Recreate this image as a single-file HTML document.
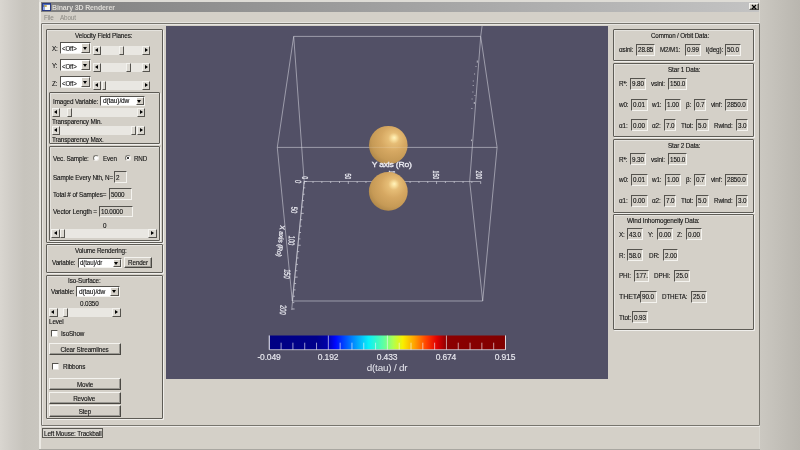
<!DOCTYPE html>
<html><head><meta charset="utf-8"><title>Binary 3D Renderer</title>
<style>
html,body{margin:0;padding:0;width:800px;height:450px;overflow:hidden;background:#cbc9c3;}
body{position:relative;font-family:"Liberation Sans",sans-serif;color:#000;-webkit-text-stroke-width:0.12px;letter-spacing:-0.15px;}
div,i,b,span{box-sizing:border-box;}
#root{position:absolute;left:0;top:0;width:800px;height:450px;overflow:hidden;will-change:transform;}
#root div{position:absolute;}
.t{white-space:nowrap;color:#111;transform-origin:0 50%;}
.ns{-webkit-text-stroke-width:0;}
.fr{border:1px solid #5e5c56;border-radius:1px;box-shadow:inset 1px 1px 0 rgba(255,255,255,.4),1px 1px 0 rgba(255,255,255,.65);}
.in{border:1px solid #55534e;border-right-color:#f4f3ef;border-bottom-color:#f4f3ef;background:#d4d0c8;white-space:nowrap;overflow:hidden;}
.in span{position:absolute;left:1px;top:0;color:#111;transform-origin:0 50%;}
.in.wh{background:#fff;}
.in.wh span{left:1.8px;}
.cb{position:absolute;right:0;top:0;bottom:0;background:#d4d0c8;border:1px solid #fff;border-right-color:#55534e;border-bottom-color:#55534e;}
.ad{position:absolute;left:50%;top:50%;margin:-1px 0 0 -2.5px;width:0;height:0;border-left:2.5px solid transparent;border-right:2.5px solid transparent;border-top:3px solid #000;}
.al{position:absolute;left:50%;top:50%;margin:-2.5px 0 0 -2px;width:0;height:0;border-top:2.5px solid transparent;border-bottom:2.5px solid transparent;border-right:3px solid #000;}
.ar{position:absolute;left:50%;top:50%;margin:-2.5px 0 0 -1px;width:0;height:0;border-top:2.5px solid transparent;border-bottom:2.5px solid transparent;border-left:3px solid #000;}
.sc{background:#e9e7e2;}
.sb{position:absolute;top:0;bottom:0;background:#dbd8d1;border:1px solid #f4f3ef;border-right-color:#55534e;border-bottom-color:#55534e;}
.btn{background:#d4d0c8;border:1px solid #f4f3ef;border-right-color:#4a4843;border-bottom-color:#4a4843;text-align:center;white-space:nowrap;color:#111;box-shadow:inset -1px -1px 0 #9a9892;}
.ck{background:#fff;border:1px solid #55534e;border-right-color:#e8e6e0;border-bottom-color:#e8e6e0;}
.rd{background:#fff;border:1px solid #77756f;border-right-color:#eeece8;border-bottom-color:#eeece8;border-radius:50%;}
.rd b{position:absolute;left:1.2px;top:1.2px;width:2px;height:2px;background:#000;border-radius:50%;}
</style></head><body><div id="root">

<div class="" style="left:0px;top:0px;width:40px;height:450px;background:linear-gradient(90deg,#d9d6d0 0%,#cfccc6 30%,#c7c4bd 60%,#c9c6bf 100%)"></div>
<div class="" style="left:760px;top:0px;width:40px;height:450px;z-index:5;background:linear-gradient(90deg,#cbc8c1 0%,#c2bfb8 50%,#b9b6af 100%)"></div>
<div class="" style="left:38.6px;top:0px;width:721.4px;height:450px;background:#d4d0c8;border-left:2px solid #ebe9e3;border-right:1px solid #d9d7d0;"></div>
<div class="" style="left:39px;top:0px;width:721px;height:2px;background:#dedcd6"></div>
<div class="" style="left:39px;top:449px;width:721px;height:1px;background:#a9a7a1"></div>
<div class="" style="left:41px;top:2px;width:718px;height:9.7px;background:linear-gradient(90deg,#808080 0%,#c3c3c3 100%)"></div>
<div class="" style="left:42px;top:3px;width:9px;height:8px;background:#5070c0;border:1px solid #2a3a80;"><div style="left:2px;top:0.5px;width:4.5px;height:5.5px;background:#f8f8f4;"></div><div style="left:1.2px;top:0.8px;width:2.6px;height:2.6px;background:#c8b060;border-radius:50%"></div><div style="left:0;top:3px;width:2px;height:3px;background:#90a8e0"></div></div>
<div class="t ns" style="left:52.2px;top:2.54px;font-size:7.6px;line-height:9.12px;transform:scaleX(0.920);color:#dddbd6;font-weight:bold;">Binary 3D Renderer</div>
<div class="btn" style="left:749px;top:3px;width:10px;height:7.4px;"><svg width="8" height="6" viewBox="0 0 8 6" style="position:absolute;left:0;top:-0.3px"><path d="M2 1 L6 5 M6 1 L2 5" stroke="#000" stroke-width="1.15" fill="none"/></svg></div>
<div class="t ns" style="left:44px;top:14.3px;font-size:7px;line-height:8.4px;transform:scaleX(0.914);color:#8b8983;">File</div>
<div class="t ns" style="left:60px;top:14.3px;font-size:7px;line-height:8.4px;transform:scaleX(0.902);color:#8b8983;">About</div>
<div class="fr" style="left:41px;top:23px;width:718.5px;height:402.5px;border-color:#77756e;box-shadow:inset 1px 1px 0 rgba(255,255,255,.45),1px 1px 0 rgba(255,255,255,.6),0 -1px 0 rgba(255,255,255,.4);"></div>
<div class="fr" style="left:46px;top:29px;width:116.5px;height:214px;"></div>
<div class="t" style="left:75.35px;top:31.8px;font-size:7px;line-height:8.4px;transform:scaleX(0.906);">Velocity Field Planes:</div>
<div class="t" style="left:51.5px;top:44.5px;font-size:7px;line-height:8.4px;transform:scaleX(0.906);">X:</div>
<div class="in wh" style="left:59.5px;top:42px;width:31.4px;height:12px;"><span style="top:1.2px;font-size:7px;line-height:9.7px;transform:scaleX(0.878)">&lt;Off&gt;</span><i class="cb" style="width:8.6px"><b class="ad"></b></i></div>
<div class="sc" style="left:92.8px;top:45.6px;width:57.5px;height:9px;"><i class="sb" style="left:0;width:8.5px"><b class="al"></b></i><i class="sb" style="right:0;width:8.5px"><b class="ar"></b></i><i class="sb" style="left:26.2px;width:5px"></i></div>
<div class="t" style="left:51.5px;top:62.2px;font-size:7px;line-height:8.4px;transform:scaleX(0.909);">Y:</div>
<div class="in wh" style="left:59.5px;top:58.8px;width:31.4px;height:12px;"><span style="top:2.1px;font-size:7px;line-height:9.7px;transform:scaleX(0.878)">&lt;Off&gt;</span><i class="cb" style="width:8.6px"><b class="ad"></b></i></div>
<div class="sc" style="left:92.8px;top:63.3px;width:57.5px;height:9px;"><i class="sb" style="left:0;width:8.5px"><b class="al"></b></i><i class="sb" style="right:0;width:8.5px"><b class="ar"></b></i><i class="sb" style="left:33.2px;width:5px"></i></div>
<div class="t" style="left:51.5px;top:79.8px;font-size:7px;line-height:8.4px;transform:scaleX(0.909);">Z:</div>
<div class="in wh" style="left:59.5px;top:76.3px;width:31.4px;height:12px;"><span style="top:2.2px;font-size:7px;line-height:9.7px;transform:scaleX(0.878)">&lt;Off&gt;</span><i class="cb" style="width:8.6px"><b class="ad"></b></i></div>
<div class="sc" style="left:92.8px;top:80.9px;width:57.5px;height:9px;"><i class="sb" style="left:0;width:8.5px"><b class="al"></b></i><i class="sb" style="right:0;width:8.5px"><b class="ar"></b></i><i class="sb" style="left:9.2px;width:4px"></i></div>
<div class="fr" style="left:49px;top:92.3px;width:110.5px;height:52px;"></div>
<div class="t" style="left:53px;top:97.5px;font-size:7px;line-height:8.4px;transform:scaleX(0.907);">Imaged Variable:</div>
<div class="in wh" style="left:100px;top:95.5px;width:45.2px;height:10.7px;"><span style="top:0.9px;font-size:7px;line-height:8.4px;transform:scaleX(0.942)">d(tau)/dw</span><i class="cb" style="width:8.6px"><b class="ad"></b></i></div>
<div class="sc" style="left:51.5px;top:107.5px;width:93.5px;height:9.3px;"><i class="sb" style="left:0;width:8.5px"><b class="al"></b></i><i class="sb" style="right:0;width:8.5px"><b class="ar"></b></i><i class="sb" style="left:15.3px;width:5px"></i></div>
<div class="t" style="left:52px;top:117.8px;font-size:7px;line-height:8.4px;transform:scaleX(0.905);">Transparency Min.</div>
<div class="sc" style="left:51.5px;top:126px;width:93.5px;height:9.2px;"><i class="sb" style="left:0;width:8.5px"><b class="al"></b></i><i class="sb" style="right:0;width:8.5px"><b class="ar"></b></i><i class="sb" style="left:79.7px;width:5px"></i></div>
<div class="t" style="left:52px;top:135.8px;font-size:7px;line-height:8.4px;transform:scaleX(0.904);">Transparency Max.</div>
<div class="fr" style="left:49px;top:146px;width:110.5px;height:94.7px;"></div>
<div class="t" style="left:52.5px;top:154.5px;font-size:7px;line-height:8.4px;transform:scaleX(0.904);">Vec. Sample:</div>
<div class="rd" style="left:92.5px;top:154.8px;width:6.4px;height:6.4px;"></div>
<div class="t" style="left:102.5px;top:154.5px;font-size:7px;line-height:8.4px;transform:scaleX(0.899);">Even</div>
<div class="rd" style="left:124.5px;top:154.8px;width:6.4px;height:6.4px;"><b></b></div>
<div class="t" style="left:134px;top:154.5px;font-size:7px;line-height:8.4px;transform:scaleX(0.891);">RND</div>
<div class="t" style="left:53px;top:173.5px;font-size:7px;line-height:8.4px;transform:scaleX(0.904);">Sample Every Nth, N=</div>
<div class="in" style="left:114px;top:171.2px;width:12.5px;height:11.5px;"><span style="top:1.6px;font-size:7px;line-height:8.4px;transform:scaleX(0.900)">2</span></div>
<div class="t" style="left:53px;top:190.7px;font-size:7px;line-height:8.4px;transform:scaleX(0.907);">Total # of Samples=</div>
<div class="in" style="left:109px;top:188.4px;width:23px;height:11.6px;"><span style="top:1.3px;font-size:7px;line-height:8.4px;transform:scaleX(0.900)">5000</span></div>
<div class="t" style="left:53px;top:207.8px;font-size:7px;line-height:8.4px;transform:scaleX(0.937);">Vector Length =</div>
<div class="in" style="left:99.3px;top:205.6px;width:33.4px;height:11.8px;"><span style="top:1.2px;font-size:7px;line-height:8.4px;transform:scaleX(0.902)">10.0000</span></div>
<div class="t" style="left:102.62px;top:221.5px;font-size:7px;line-height:8.4px;transform:scaleX(0.900);">0</div>
<div class="sc" style="left:51.4px;top:229px;width:105.3px;height:9px;"><i class="sb" style="left:0;width:8.5px"><b class="al"></b></i><i class="sb" style="right:0;width:8.5px"><b class="ar"></b></i><i class="sb" style="left:8.6px;width:4.7px"></i></div>
<div class="fr" style="left:46px;top:244.3px;width:116.5px;height:29px;"></div>
<div class="t" style="left:75.25px;top:247px;font-size:7px;line-height:8.4px;transform:scaleX(0.904);">Volume Rendering:</div>
<div class="t" style="left:52px;top:259.2px;font-size:7px;line-height:8.4px;transform:scaleX(0.910);">Variable:</div>
<div class="in wh" style="left:77.5px;top:257.5px;width:44.7px;height:10.9px;"><span style="top:0.9px;font-size:7px;line-height:8.6px;transform:scaleX(0.884)">d(tau)/dr</span><i class="cb" style="width:8.6px"><b class="ad"></b></i></div>
<div class="btn" style="left:124px;top:257.3px;width:28px;height:11px;font-size:7px;line-height:10.6px"><span style="display:inline-block;transform:scaleX(0.900)">Render</span></div>
<div class="fr" style="left:46px;top:274.5px;width:116.5px;height:144.3px;"></div>
<div class="t" style="left:68.18px;top:277.2px;font-size:7px;line-height:8.4px;transform:scaleX(0.908);">Iso-Surface:</div>
<div class="t" style="left:50.5px;top:287.7px;font-size:7px;line-height:8.4px;transform:scaleX(0.910);">Variable:</div>
<div class="in wh" style="left:76px;top:285.6px;width:43.9px;height:11.1px;"><span style="top:1.5px;font-size:7px;line-height:8.8px;transform:scaleX(0.942)">d(tau)/dw</span><i class="cb" style="width:8.6px"><b class="ad"></b></i></div>
<div class="t" style="left:79.74px;top:299.5px;font-size:7px;line-height:8.4px;transform:scaleX(0.903);">0.0350</div>
<div class="sc" style="left:49px;top:308px;width:71.7px;height:8.7px;"><i class="sb" style="left:0;width:8.5px"><b class="al"></b></i><i class="sb" style="right:0;width:8.5px"><b class="ar"></b></i><i class="sb" style="left:14px;width:5px"></i></div>
<div class="t" style="left:49px;top:317.8px;font-size:7px;line-height:8.4px;transform:scaleX(0.906);">Level</div>
<div class="ck" style="left:50.5px;top:329.8px;width:7px;height:7px;"></div>
<div class="t" style="left:61px;top:329.8px;font-size:7px;line-height:8.4px;transform:scaleX(0.900);">IsoShow</div>
<div class="btn" style="left:48.5px;top:343px;width:72.2px;height:12.3px;font-size:7px;line-height:11.9px"><span style="display:inline-block;transform:scaleX(0.907)">Clear Streamlines</span></div>
<div class="ck" style="left:52.3px;top:362.8px;width:7px;height:7px;"></div>
<div class="t" style="left:62.7px;top:362.8px;font-size:7px;line-height:8.4px;transform:scaleX(0.902);">Ribbons</div>
<div class="btn" style="left:48.5px;top:377.8px;width:72.2px;height:12px;font-size:7px;line-height:11.6px"><span style="display:inline-block;transform:scaleX(0.901)">Movie</span></div>
<div class="btn" style="left:48.5px;top:391.5px;width:72.2px;height:12px;font-size:7px;line-height:11.6px"><span style="display:inline-block;transform:scaleX(0.902)">Revolve</span></div>
<div class="btn" style="left:48.5px;top:405.2px;width:72.2px;height:11.8px;font-size:7px;line-height:11.4px"><span style="display:inline-block;transform:scaleX(0.903)">Step</span></div>
<div class="" style="left:42px;top:428.3px;width:61px;height:9.3px;border:1px solid #5c5a54;background:#d8d5ce;"></div>
<div class="t" style="left:43.5px;top:429.8px;font-size:7px;line-height:8.4px;transform:scaleX(0.908);">Left Mouse: Trackball</div>
<div class="fr" style="left:613px;top:29.3px;width:141px;height:31.7px;"></div>
<div class="t" style="left:651px;top:32px;font-size:7px;line-height:8.4px;transform:scaleX(0.891);">Common / Orbit Data:</div>
<div class="t" style="left:619px;top:46.2px;font-size:7px;line-height:8.4px;transform:scaleX(0.915);">αsini:</div>
<div class="in" style="left:636px;top:44px;width:18.7px;height:11.7px;"><span style="top:1.2px;font-size:7px;line-height:8.4px;transform:scaleX(0.904)">28.85</span></div>
<div class="t" style="left:660.2px;top:46.2px;font-size:7px;line-height:8.4px;transform:scaleX(0.900);">M2/M1:</div>
<div class="in" style="left:685px;top:44px;width:15.5px;height:11.7px;"><span style="top:1.2px;font-size:7px;line-height:8.4px;transform:scaleX(0.905)">0.99</span></div>
<div class="t" style="left:706px;top:46.2px;font-size:7px;line-height:8.4px;transform:scaleX(0.913);">i(deg):</div>
<div class="in" style="left:725px;top:44px;width:16px;height:11.7px;"><span style="top:1.2px;font-size:7px;line-height:8.4px;transform:scaleX(0.905)">50.0</span></div>
<div class="fr" style="left:613px;top:63px;width:141px;height:74.2px;"></div>
<div class="t" style="left:667.55px;top:65.5px;font-size:7px;line-height:8.4px;transform:scaleX(0.909);">Star 1 Data:</div>
<div class="t" style="left:619px;top:79.8px;font-size:7px;line-height:8.4px;transform:scaleX(0.907);">R*:</div>
<div class="in" style="left:630px;top:78px;width:16.3px;height:11.7px;"><span style="top:0.8px;font-size:7px;line-height:8.4px;transform:scaleX(0.905)">9.80</span></div>
<div class="t" style="left:651px;top:79.8px;font-size:7px;line-height:8.4px;transform:scaleX(0.917);">vsini:</div>
<div class="in" style="left:667.5px;top:78px;width:19.5px;height:11.7px;"><span style="top:0.8px;font-size:7px;line-height:8.4px;transform:scaleX(0.904)">150.0</span></div>
<div class="t" style="left:619px;top:100.8px;font-size:7px;line-height:8.4px;transform:scaleX(0.902);">w0:</div>
<div class="in" style="left:631px;top:99px;width:16.5px;height:11.7px;"><span style="top:0.8px;font-size:7px;line-height:8.4px;transform:scaleX(0.905)">0.01</span></div>
<div class="t" style="left:652px;top:100.8px;font-size:7px;line-height:8.4px;transform:scaleX(0.902);">w1:</div>
<div class="in" style="left:664.5px;top:99px;width:16.5px;height:11.7px;"><span style="top:0.8px;font-size:7px;line-height:8.4px;transform:scaleX(0.905)">1.00</span></div>
<div class="t" style="left:686px;top:100.8px;font-size:7px;line-height:8.4px;transform:scaleX(0.911);">β:</div>
<div class="in" style="left:694px;top:99px;width:12.3px;height:11.7px;"><span style="top:0.8px;font-size:7px;line-height:8.4px;transform:scaleX(0.907)">0.7</span></div>
<div class="t" style="left:711px;top:100.8px;font-size:7px;line-height:8.4px;transform:scaleX(0.919);">vinf:</div>
<div class="in" style="left:725px;top:99px;width:22.5px;height:11.7px;"><span style="top:0.8px;font-size:7px;line-height:8.4px;transform:scaleX(0.903)">2850.0</span></div>
<div class="t" style="left:619px;top:121.6px;font-size:7px;line-height:8.4px;transform:scaleX(0.906);">α1:</div>
<div class="in" style="left:631px;top:119px;width:16.5px;height:11.7px;"><span style="top:1.6px;font-size:7px;line-height:8.4px;transform:scaleX(0.905)">0.00</span></div>
<div class="t" style="left:652px;top:121.6px;font-size:7px;line-height:8.4px;transform:scaleX(0.906);">α2:</div>
<div class="in" style="left:664px;top:119px;width:12.3px;height:11.7px;"><span style="top:1.6px;font-size:7px;line-height:8.4px;transform:scaleX(0.907)">7.0</span></div>
<div class="t" style="left:681px;top:121.6px;font-size:7px;line-height:8.4px;transform:scaleX(0.914);">Ttot:</div>
<div class="in" style="left:696px;top:119px;width:13px;height:11.7px;"><span style="top:1.6px;font-size:7px;line-height:8.4px;transform:scaleX(0.907)">5.0</span></div>
<div class="t" style="left:714px;top:121.6px;font-size:7px;line-height:8.4px;transform:scaleX(0.903);">Rwind:</div>
<div class="in" style="left:736px;top:119px;width:11.5px;height:11.7px;"><span style="top:1.6px;font-size:7px;line-height:8.4px;transform:scaleX(0.907)">3.0</span></div>
<div class="fr" style="left:613px;top:139px;width:141px;height:73.6px;"></div>
<div class="t" style="left:667.55px;top:141.5px;font-size:7px;line-height:8.4px;transform:scaleX(0.909);">Star 2 Data:</div>
<div class="t" style="left:619px;top:155.7px;font-size:7px;line-height:8.4px;transform:scaleX(0.907);">R*:</div>
<div class="in" style="left:630px;top:153px;width:16.3px;height:11.7px;"><span style="top:1.7px;font-size:7px;line-height:8.4px;transform:scaleX(0.905)">9.30</span></div>
<div class="t" style="left:651px;top:155.7px;font-size:7px;line-height:8.4px;transform:scaleX(0.917);">vsini:</div>
<div class="in" style="left:667.5px;top:153px;width:19.5px;height:11.7px;"><span style="top:1.7px;font-size:7px;line-height:8.4px;transform:scaleX(0.904)">150.0</span></div>
<div class="t" style="left:619px;top:176.2px;font-size:7px;line-height:8.4px;transform:scaleX(0.902);">w0:</div>
<div class="in" style="left:631px;top:174px;width:16.5px;height:11.7px;"><span style="top:1.2px;font-size:7px;line-height:8.4px;transform:scaleX(0.905)">0.01</span></div>
<div class="t" style="left:652px;top:176.2px;font-size:7px;line-height:8.4px;transform:scaleX(0.902);">w1:</div>
<div class="in" style="left:664.5px;top:174px;width:16.5px;height:11.7px;"><span style="top:1.2px;font-size:7px;line-height:8.4px;transform:scaleX(0.905)">1.00</span></div>
<div class="t" style="left:686px;top:176.2px;font-size:7px;line-height:8.4px;transform:scaleX(0.911);">β:</div>
<div class="in" style="left:694px;top:174px;width:12.3px;height:11.7px;"><span style="top:1.2px;font-size:7px;line-height:8.4px;transform:scaleX(0.907)">0.7</span></div>
<div class="t" style="left:711px;top:176.2px;font-size:7px;line-height:8.4px;transform:scaleX(0.919);">vinf:</div>
<div class="in" style="left:725px;top:174px;width:22.5px;height:11.7px;"><span style="top:1.2px;font-size:7px;line-height:8.4px;transform:scaleX(0.903)">2850.0</span></div>
<div class="t" style="left:619px;top:196.9px;font-size:7px;line-height:8.4px;transform:scaleX(0.906);">α1:</div>
<div class="in" style="left:631px;top:195px;width:16.5px;height:11.7px;"><span style="top:0.9px;font-size:7px;line-height:8.4px;transform:scaleX(0.905)">0.00</span></div>
<div class="t" style="left:652px;top:196.9px;font-size:7px;line-height:8.4px;transform:scaleX(0.906);">α2:</div>
<div class="in" style="left:664px;top:195px;width:12.3px;height:11.7px;"><span style="top:0.9px;font-size:7px;line-height:8.4px;transform:scaleX(0.907)">7.0</span></div>
<div class="t" style="left:681px;top:196.9px;font-size:7px;line-height:8.4px;transform:scaleX(0.914);">Ttot:</div>
<div class="in" style="left:696px;top:195px;width:13px;height:11.7px;"><span style="top:0.9px;font-size:7px;line-height:8.4px;transform:scaleX(0.907)">5.0</span></div>
<div class="t" style="left:714px;top:196.9px;font-size:7px;line-height:8.4px;transform:scaleX(0.903);">Rwind:</div>
<div class="in" style="left:736px;top:195px;width:11.5px;height:11.7px;"><span style="top:0.9px;font-size:7px;line-height:8.4px;transform:scaleX(0.907)">3.0</span></div>
<div class="fr" style="left:613px;top:214.2px;width:141px;height:115.8px;"></div>
<div class="t" style="left:626.5px;top:217px;font-size:7px;line-height:8.4px;transform:scaleX(0.919);">Wind Inhomogeneity Data:</div>
<div class="t" style="left:618.7px;top:230.5px;font-size:7px;line-height:8.4px;transform:scaleX(0.906);">X:</div>
<div class="in" style="left:627.4px;top:228px;width:15.6px;height:11.7px;"><span style="top:1.5px;font-size:7px;line-height:8.4px;transform:scaleX(0.905)">43.0</span></div>
<div class="t" style="left:648px;top:230.5px;font-size:7px;line-height:8.4px;transform:scaleX(0.909);">Y:</div>
<div class="in" style="left:657px;top:228px;width:15.5px;height:11.7px;"><span style="top:1.5px;font-size:7px;line-height:8.4px;transform:scaleX(0.905)">0.00</span></div>
<div class="t" style="left:677px;top:230.5px;font-size:7px;line-height:8.4px;transform:scaleX(0.909);">Z:</div>
<div class="in" style="left:685.5px;top:228px;width:16.2px;height:11.7px;"><span style="top:1.5px;font-size:7px;line-height:8.4px;transform:scaleX(0.905)">0.00</span></div>
<div class="t" style="left:618.7px;top:251.5px;font-size:7px;line-height:8.4px;transform:scaleX(0.904);">R:</div>
<div class="in" style="left:627.4px;top:249px;width:15.6px;height:11.7px;"><span style="top:1.5px;font-size:7px;line-height:8.4px;transform:scaleX(0.905)">58.0</span></div>
<div class="t" style="left:648.8px;top:251.5px;font-size:7px;line-height:8.4px;transform:scaleX(0.899);">DR:</div>
<div class="in" style="left:663px;top:249px;width:15.4px;height:11.7px;"><span style="top:1.5px;font-size:7px;line-height:8.4px;transform:scaleX(0.905)">2.00</span></div>
<div class="t" style="left:618.7px;top:272.1px;font-size:7px;line-height:8.4px;transform:scaleX(0.905);">PHI:</div>
<div class="in" style="left:633.6px;top:270px;width:15.4px;height:11.7px;"><span style="top:1.1px;font-size:7px;line-height:8.4px;transform:scaleX(0.905)">177.</span></div>
<div class="t" style="left:654.4px;top:272.1px;font-size:7px;line-height:8.4px;transform:scaleX(0.901);">DPHI:</div>
<div class="in" style="left:674px;top:270px;width:16px;height:11.7px;"><span style="top:1.1px;font-size:7px;line-height:8.4px;transform:scaleX(0.905)">25.0</span></div>
<div class="t" style="left:618.7px;top:292.9px;font-size:7px;line-height:8.4px;transform:scaleX(1.014);">THETA:</div>
<div class="in" style="left:640.4px;top:291px;width:16.2px;height:11.7px;"><span style="top:0.9px;font-size:7px;line-height:8.4px;transform:scaleX(0.905)">90.0</span></div>
<div class="t" style="left:661.6px;top:292.9px;font-size:7px;line-height:8.4px;transform:scaleX(0.897);">DTHETA:</div>
<div class="in" style="left:691px;top:291px;width:16.3px;height:11.7px;"><span style="top:0.9px;font-size:7px;line-height:8.4px;transform:scaleX(0.905)">25.0</span></div>
<div class="t" style="left:618.7px;top:313.5px;font-size:7px;line-height:8.4px;transform:scaleX(0.914);">Ttot:</div>
<div class="in" style="left:632px;top:311px;width:16px;height:11.7px;"><span style="top:1.5px;font-size:7px;line-height:8.4px;transform:scaleX(0.905)">0.93</span></div>
<svg width="441.7" height="352.8" viewBox="166.3 26 441.7 352.8" style="position:absolute;left:166.3px;top:26px;background:#525066;font-family:'Liberation Sans',sans-serif">
<defs>
<radialGradient id="sg" cx="0.6" cy="0.38" r="0.72" fx="0.655" fy="0.305">
<stop offset="0" stop-color="#fff3bd"/><stop offset="0.07" stop-color="#fae3a2"/><stop offset="0.2" stop-color="#e6bd76"/><stop offset="0.45" stop-color="#d6a862"/><stop offset="0.75" stop-color="#c69a56"/><stop offset="0.92" stop-color="#b0884a"/><stop offset="1" stop-color="#9c7840"/>
</radialGradient>
<linearGradient id="cm" x1="0" x2="1" y1="0" y2="0">
<stop offset="0" stop-color="#000083"/><stop offset="0.2" stop-color="#00008b"/><stop offset="0.245" stop-color="#0000a8"/>
<stop offset="0.28" stop-color="#0008ff"/><stop offset="0.345" stop-color="#0078ff"/><stop offset="0.42" stop-color="#08f0f8"/>
<stop offset="0.485" stop-color="#60ffa0"/><stop offset="0.525" stop-color="#b0ff50"/><stop offset="0.565" stop-color="#f8f000"/>
<stop offset="0.615" stop-color="#ffa000"/><stop offset="0.665" stop-color="#ff4000"/><stop offset="0.71" stop-color="#e00000"/>
<stop offset="0.75" stop-color="#8c0000"/><stop offset="1" stop-color="#800000"/>
</linearGradient></defs>
<g stroke="#d8d8e0" stroke-opacity="0.8" stroke-width="0.7" fill="none">
<path d="M294 36.4H481M292.6 301H483M277.6 147.4H497.4"/>
<path d="M294 36.4L277.6 147.4L292.6 301M294 36.4L304.5 181.5L292.6 301M481 36.4L497.4 147.4L483 301M482.4 26L481 36.4L470 181.5L483 301"/>
<path d="M304.5 181.5H481M304.5 181.5L292 310"/>
</g>
<path d="M304.5 181.5v2.4M313.32 181.5v1.5M322.15 181.5v1.5M330.98 181.5v1.5M339.8 181.5v1.5M348.62 181.5v2.4M357.45 181.5v1.5M366.27 181.5v1.5M375.1 181.5v1.5M383.93 181.5v1.5M392.75 181.5v2.4M401.57 181.5v1.5M410.4 181.5v1.5M419.23 181.5v1.5M428.05 181.5v1.5M436.88 181.5v2.4M445.7 181.5v1.5M454.52 181.5v1.5M463.35 181.5v1.5M472.18 181.5v1.5M481 181.5v2.4M304.5 181.5h2.6M303.89 187.88h1.7M303.28 194.25h1.7M302.67 200.62h1.7M302.06 207h1.7M301.45 213.38h2.6M300.84 219.75h1.7M300.23 226.12h1.7M299.62 232.5h1.7M299.01 238.88h1.7M298.4 245.25h2.6M297.79 251.62h1.7M297.18 258h1.7M296.57 264.38h1.7M295.96 270.75h1.7M295.35 277.12h2.6M294.74 283.5h1.7M294.13 289.88h1.7M293.52 296.25h1.7M292.91 302.62h1.7M292.3 309h2.6" stroke="#e8e8f0" stroke-opacity="0.85" stroke-width="0.75" fill="none"/>
<path d="M477.6 60.5v2.2M474.9 73.5v1M473.6 80.5v1M473.5 85v1M473.2 91.5v1M472.4 98.5v1M474.6 102v2M472.2 108v1M471.9 139.5v1.6M476.3 66v0.9M475.2 95v0.9" stroke="#f0f0f4" stroke-opacity="0.8" stroke-width="0.8" fill="none"/>
<text transform="translate(305,179.2) rotate(90) scale(0.61,1)" font-size="8.8" fill="#e9e9f0" stroke="#e9e9f0" stroke-width="0.25" text-anchor="end" x="0" y="3.15">0</text>
<text transform="translate(348.8,179.2) rotate(90) scale(0.61,1)" font-size="8.8" fill="#e9e9f0" stroke="#e9e9f0" stroke-width="0.25" text-anchor="end" x="0" y="3.15">50</text>
<text transform="translate(392.5,179.2) rotate(90) scale(0.61,1)" font-size="8.8" fill="#e9e9f0" stroke="#e9e9f0" stroke-width="0.25" text-anchor="end" x="0" y="3.15">100</text>
<text transform="translate(436.2,179.2) rotate(90) scale(0.61,1)" font-size="8.8" fill="#e9e9f0" stroke="#e9e9f0" stroke-width="0.25" text-anchor="end" x="0" y="3.15">150</text>
<text transform="translate(479.5,179.2) rotate(90) scale(0.61,1)" font-size="8.8" fill="#e9e9f0" stroke="#e9e9f0" stroke-width="0.25" text-anchor="end" x="0" y="3.15">200</text>
<circle cx="388.6" cy="145.2" r="19.3" fill="url(#sg)"/>
<path d="M369.5 147.4H408" stroke="#fff" stroke-opacity="0.22" stroke-width="0.7" fill="none"/>
<text x="392" y="166.6" font-size="6.4" fill="#e9e9f0" text-anchor="middle" textLength="40" lengthAdjust="spacingAndGlyphs" stroke="#e9e9f0" stroke-width="0.3">Y axis (Ro)</text>
<circle cx="388.6" cy="191.4" r="19.4" fill="url(#sg)"/>
<text transform="translate(298.5,181.5) rotate(95) scale(0.66,1)" font-size="8.8" fill="#e9e9f0" stroke="#e9e9f0" stroke-width="0.25" text-anchor="middle" x="0" y="3.15">0</text>
<text transform="translate(294.7,210) rotate(95) scale(0.66,1)" font-size="8.8" fill="#e9e9f0" stroke="#e9e9f0" stroke-width="0.25" text-anchor="middle" x="0" y="3.15">50</text>
<text transform="translate(292,240.5) rotate(95) scale(0.66,1)" font-size="8.8" fill="#e9e9f0" stroke="#e9e9f0" stroke-width="0.25" text-anchor="middle" x="0" y="3.15">100</text>
<text transform="translate(287.5,273.9) rotate(95) scale(0.66,1)" font-size="8.8" fill="#e9e9f0" stroke="#e9e9f0" stroke-width="0.25" text-anchor="middle" x="0" y="3.15">150</text>
<text transform="translate(283.5,309.9) rotate(95) scale(0.66,1)" font-size="8.8" fill="#e9e9f0" stroke="#e9e9f0" stroke-width="0.25" text-anchor="middle" x="0" y="3.15">200</text>
<text transform="translate(281.2,241) rotate(96.6)" font-size="6.8" fill="#e9e9f0" stroke="#e9e9f0" stroke-width="0.25" text-anchor="middle" x="0" y="2.4" textLength="31.5" lengthAdjust="spacingAndGlyphs">X axis (Ro)</text>
<rect x="269.6" y="335.5" width="236.2" height="14" fill="url(#cm)"/>
<path d="M269.6 335.5V349.7H505.8V335.5M269.6 335.5V349.7M281.41 342.7V349.7M293.22 342.7V349.7M305.03 342.7V349.7M316.84 342.7V349.7M328.65 335.5V349.7M340.46 342.7V349.7M352.27 342.7V349.7M364.08 342.7V349.7M375.89 342.7V349.7M387.7 335.5V349.7M399.51 342.7V349.7M411.32 342.7V349.7M423.13 342.7V349.7M434.94 342.7V349.7M446.75 335.5V349.7M458.56 342.7V349.7M470.37 342.7V349.7M482.18 342.7V349.7M493.99 342.7V349.7M505.8 335.5V349.7" stroke="#f4f4f8" stroke-opacity="0.9" stroke-width="0.7" fill="none"/>
<text x="269.3" y="360" font-size="8.5" fill="#e9e9f0" stroke="#e9e9f0" stroke-width="0.15" text-anchor="middle">-0.049</text>
<text x="328.4" y="360" font-size="8.5" fill="#e9e9f0" stroke="#e9e9f0" stroke-width="0.15" text-anchor="middle">0.192</text>
<text x="387.4" y="360" font-size="8.5" fill="#e9e9f0" stroke="#e9e9f0" stroke-width="0.15" text-anchor="middle">0.433</text>
<text x="446.2" y="360" font-size="8.5" fill="#e9e9f0" stroke="#e9e9f0" stroke-width="0.15" text-anchor="middle">0.674</text>
<text x="505.3" y="360" font-size="8.5" fill="#e9e9f0" stroke="#e9e9f0" stroke-width="0.15" text-anchor="middle">0.915</text>
<text x="387.4" y="371.2" font-size="8.8" fill="#e9e9f0" text-anchor="middle" textLength="40.8" lengthAdjust="spacingAndGlyphs">d(tau) / dr</text>
</svg>
</div></body></html>
